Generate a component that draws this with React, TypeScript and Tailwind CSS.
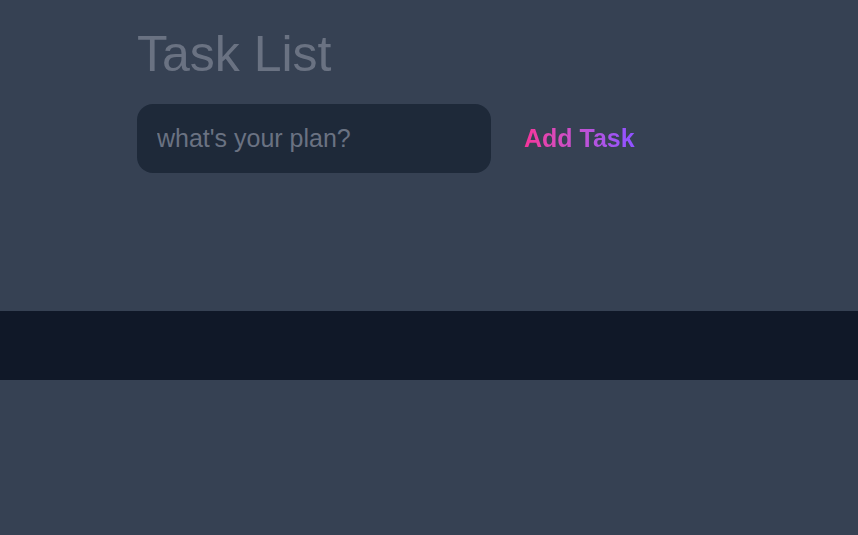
export default function App() {
  return (
    <div className="min-h-[535px] bg-gray-700 font-['Liberation_Sans',Arial,sans-serif]">
      <div className="pl-[137px] pt-[29px]">
        <h1 className="text-[50px] leading-none text-gray-500">Task List</h1>
        <form
          className="mt-[25px] flex items-center"
          onSubmit={(e) => e.preventDefault()}
        >
          <input
            type="text"
            placeholder="what's your plan?"
            className="h-[69px] w-[354px] rounded-2xl bg-gray-800 px-5 text-[25px] text-gray-300 placeholder:text-gray-500 outline-none"
          />
          <button
            type="submit"
            className="ml-[33px] bg-gradient-to-r from-pink-500 to-violet-500 bg-clip-text text-[25px] font-bold text-transparent"
          >
            Add Task
          </button>
        </form>
      </div>
      <div className="mt-[138px] h-[69px] bg-gray-900"></div>
    </div>
  );
}
